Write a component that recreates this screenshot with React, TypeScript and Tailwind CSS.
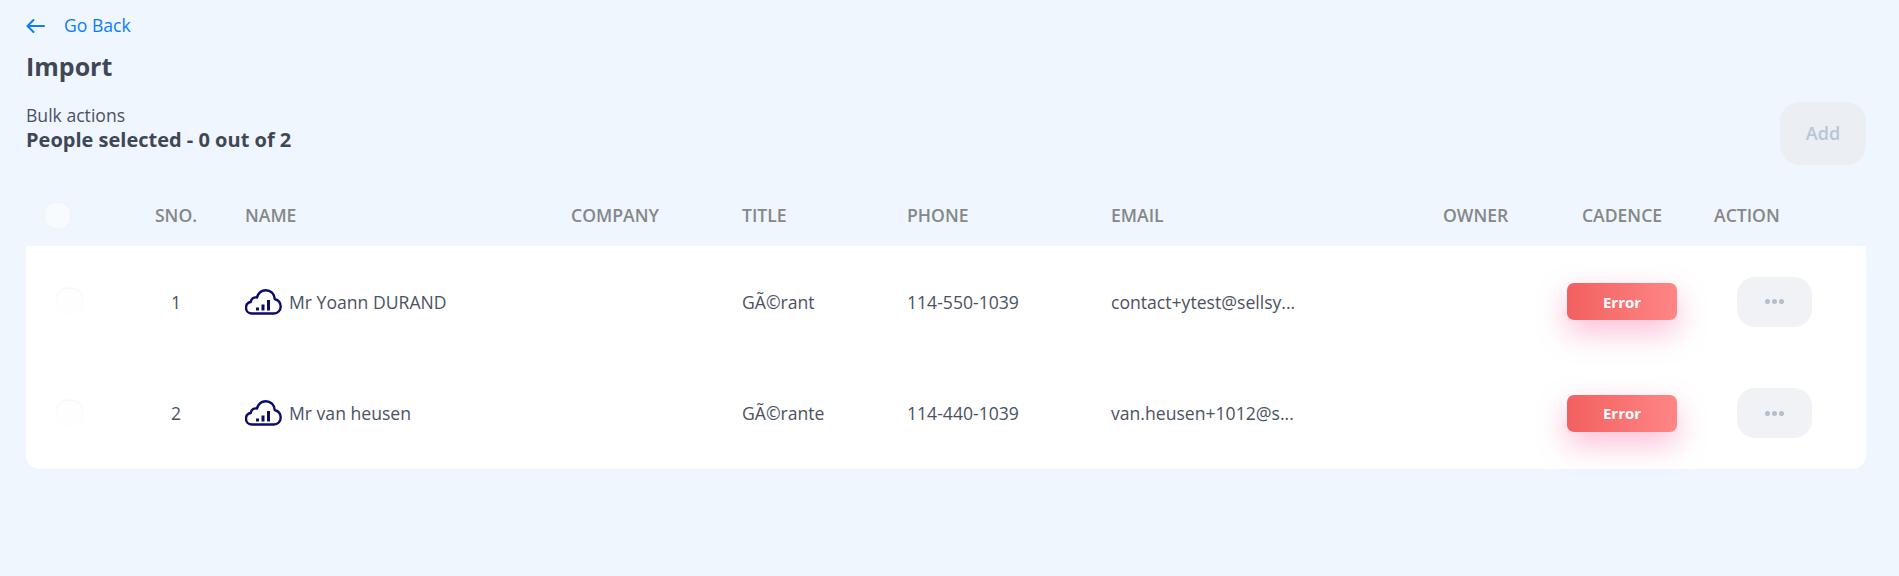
const columns = "grid grid-cols-[100px_119px_326px_171px_165px_204px_332px_124px_110px_189px] items-center";

const people = [
  { sno: 1, name: "Mr Yoann DURAND", title: "GÃ©rant", phone: "114-550-1039", email: "contact+ytest@sellsy..." },
  { sno: 2, name: "Mr van heusen", title: "GÃ©rante", phone: "114-440-1039", email: "van.heusen+1012@s..." },
];

function CloudIcon() {
  return (
    <svg width="37" height="26" viewBox="0 0 37 26" fill="none" stroke="#0b0b6b" strokeWidth="2.400" strokeLinecap="round" strokeLinejoin="round" className="shrink-0">
      <path d="M7.500 24.500H7c-3.400 0-6-2.500-6-5.800 0-2.800 2-5.200 4.700-5.700.4-3.400 3.200-5.200 6.200-4.500C13.400 4 17 1.200 20.700 1.200c5 0 8.800 3.800 9 8.800 3.500 1 6 4 6 7.600 0 3.900-3 6.900-6.800 6.900H7.500Z" />
      <path d="M12.500 21.500v-3M18 21.500v-6M23.500 21.500V11" strokeWidth="3" strokeLinecap="butt" />
    </svg>
  );
}

function Checkbox({ className }: { className: string }) {
  return <div className={`h-[25px] w-[25px] rounded-[10px] ${className}`} />;
}

export default function App() {
  return (
    <div className="h-[576px] bg-[#eff6fd] pl-[26px] pr-[33px] font-['Open_Sans',sans-serif] text-[#3f4756]">
      <div className="flex h-[50px] items-center gap-[19px] pt-[2px] text-[#0a7cff]">
        <svg width="19" height="14" viewBox="0 0 19 14" fill="none" stroke="currentColor" strokeWidth="2" strokeLinecap="round" strokeLinejoin="round">
          <path d="M1.500 7H18M7.500 1l-6 6 6 6" />
        </svg>
        <span className="text-[17.600px] leading-none">Go Back</span>
      </div>
      <h1 className="text-[25px] font-bold leading-[32px] text-[#3f4756]">Import</h1>

      <div className="flex items-start justify-between">
        <div className="mt-[21px]">
          <div className="text-[17.600px] leading-[24px] text-[#4a5262]">Bulk actions</div>
          <div className="text-[20px] font-bold leading-[26px]">People selected - 0 out of 2</div>
        </div>
        <button className="mt-[20px] h-[63px] w-[86px] rounded-[20px] bg-[#ebeef2] text-[18px] font-semibold text-[#b6c6d6]">Add</button>
      </div>

      <div className={`${columns} mt-[19px] h-[62px] text-[17.600px] font-semibold text-[#85878a]`}>
        <Checkbox className="ml-[19px] bg-[#f7fbfe] shadow-[0_0_3px_rgba(0,0,0,0.03)]" />
        <div className="pr-[19px] text-center">SNO.</div>
        <div>NAME</div>
        <div>COMPANY</div>
        <div>TITLE</div>
        <div>PHONE</div>
        <div>EMAIL</div>
        <div>OWNER</div>
        <div className="text-center">CADENCE</div>
        <div className="pl-[37px]">ACTION</div>
      </div>

      <div className="rounded-b-[14px] bg-white text-[17.600px] text-[#4a5262]">
        {people.map((p) => (
          <div key={p.sno} className={`${columns} h-[111.500px]`}>
            <Checkbox className="ml-[31px] bg-[#fefefe] shadow-[0_-1px_3px_rgba(0,0,0,0.05)]" />
            <div className="pr-[19px] text-center">{p.sno}</div>
            <div className="flex items-center gap-[7px]">
              <CloudIcon />
              <span>{p.name}</span>
            </div>
            <div />
            <div>{p.title}</div>
            <div>{p.phone}</div>
            <div>{p.email}</div>
            <div />
            <div className="flex h-[37px] items-center justify-center rounded-[7px] bg-linear-to-r from-[#f26060] to-[#ff8585] text-[15px] font-bold text-white shadow-[0_12px_30px_rgba(245,90,150,0.4)]">
              Error
            </div>
            <div className="pl-[60px]">
              <div className="flex h-[50px] w-[75px] items-center justify-center gap-[2px] rounded-[18px] bg-[#f0f2f5]">
                <span className="h-[5px] w-[5px] rounded-full bg-[#b4bfcd]" />
                <span className="h-[5px] w-[5px] rounded-full bg-[#b4bfcd]" />
                <span className="h-[5px] w-[5px] rounded-full bg-[#b4bfcd]" />
              </div>
            </div>
          </div>
        ))}
      </div>
    </div>
  );
}
